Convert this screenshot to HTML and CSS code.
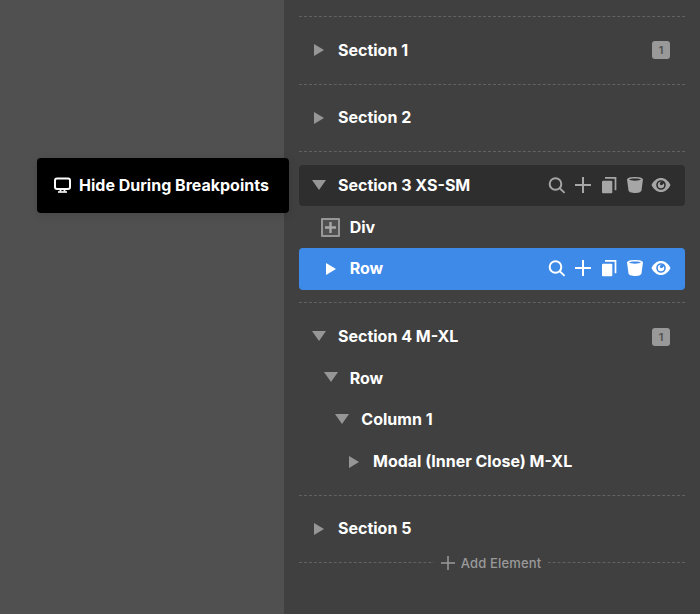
FILE: index.html
```html
<!DOCTYPE html>
<html lang="en">
<head>
<meta charset="utf-8">
<title>Navigator</title>
<link rel="stylesheet" href="styles.css">
</head>
<body>
<svg class="defs" width="0" height="0" aria-hidden="true">
  <symbol id="i-search" viewBox="0 0 18 18"><circle cx="7.5" cy="8" r="5.8" fill="none" stroke="currentColor" stroke-width="2"/><path d="M12 12.500l4.600 4.400" fill="none" stroke="currentColor" stroke-width="1.800"/></symbol>
  <symbol id="i-plus" viewBox="0 0 18 18"><path d="M1 9h16M9 1v16" fill="none" stroke="currentColor" stroke-width="2"/></symbol>
  <symbol id="i-copy" viewBox="0 0 18 18"><path d="M5 1.800h10.500v12.400" fill="none" stroke="currentColor" stroke-width="1.700"/><rect x="2" y="4.700" width="10.300" height="12.600" rx="1" fill="currentColor"/></symbol>
  <symbol id="i-trash" viewBox="0 0 18 18"><path fill-rule="evenodd" d="M1 3.500C1 1.800 5 1 9 1s8 .8 8 2.500c0 .6-.2 1.200-.3 1.900l-1.200 9.100C15.200 16.200 12 17 9 17s-6.200-.8-6.500-2.500L1.300 5.400C1.200 4.700 1 4.100 1 3.500zM3 3.600C3.800 4.300 6.200 4.800 9 4.800s5.200-.5 6-1.200C14.200 2.900 11.800 2.400 9 2.400S3.800 2.900 3 3.600z" fill="currentColor"/></symbol>
  <symbol id="i-eye" viewBox="0 0 20 18"><path fill-rule="evenodd" d="M.5 9C2.500 4.700 6 2 10 2s7.500 2.700 9.500 7c-2 4.300-5.500 7-9.500 7S2.500 13.300.5 9zM10 4.200a4.800 4.800 0 1 0 0 9.600 4.800 4.800 0 0 0 0-9.600z" fill="currentColor"/><path d="M10 5.800a3.200 3.200 0 1 0 3.200 3.200c0-.7-.2-1.300-.6-1.800-.3 1.100-1.200 1.900-2.300 1.900-.9 0-1.500-.6-1.500-1.400 0-.9.6-1.500 1.500-1.700.3 0 .5-.1.700-.2z" fill="currentColor"/></symbol>
</svg>

<main class="layout">
  <div class="canvas"></div>
  <aside class="panel">
    <section class="section">
      <div class="row">
        <span class="caret caret-right"></span><span class="label">Section 1</span>
        <span class="badge">1</span>
      </div>
    </section>
    <section class="section">
      <div class="row">
        <span class="caret caret-right"></span><span class="label">Section 2</span>
      </div>
    </section>
    <section class="section">
      <div class="row row-dark">
        <span class="caret caret-down"></span><span class="label">Section 3 XS-SM</span>
        <div class="actions">
          <svg class="act"><use href="#i-search"/></svg>
          <svg class="act"><use href="#i-plus"/></svg>
          <svg class="act"><use href="#i-copy"/></svg>
          <svg class="act"><use href="#i-trash"/></svg>
          <svg class="act act-eye"><use href="#i-eye"/></svg>
        </div>
      </div>
      <div class="row depth-1">
        <span class="div-icon"><svg width="11" height="11" viewBox="0 0 11 11"><path d="M0 5.500h11M5.500 0v11" fill="none" stroke="currentColor" stroke-width="2.400"/></svg></span><span class="label">Div</span>
      </div>
      <div class="row row-blue depth-1">
        <span class="caret caret-right"></span><span class="label">Row</span>
        <div class="actions">
          <svg class="act"><use href="#i-search"/></svg>
          <svg class="act"><use href="#i-plus"/></svg>
          <svg class="act"><use href="#i-copy"/></svg>
          <svg class="act"><use href="#i-trash"/></svg>
          <svg class="act act-eye"><use href="#i-eye"/></svg>
        </div>
      </div>
    </section>
    <section class="section">
      <div class="row">
        <span class="caret caret-down"></span><span class="label">Section 4 M-XL</span>
        <span class="badge">1</span>
      </div>
      <div class="row depth-1">
        <span class="caret caret-down"></span><span class="label">Row</span>
      </div>
      <div class="row depth-2">
        <span class="caret caret-down"></span><span class="label">Column 1</span>
      </div>
      <div class="row depth-3">
        <span class="caret caret-right"></span><span class="label">Modal (Inner Close) M-XL</span>
      </div>
    </section>
    <section class="section section-last">
      <div class="row">
        <span class="caret caret-right"></span><span class="label">Section 5</span>
      </div>
    </section>
    <div class="add">
      <div class="add-group">
        <svg class="add-plus" width="14" height="14" viewBox="0 0 14 14"><path d="M0 7h14M7 0v14" fill="none" stroke="currentColor" stroke-width="1.500"/></svg>
        <span class="add-label">Add Element</span>
      </div>
    </div>
  </aside>
</main>

<div class="tooltip">
  <svg class="tip-icon" width="17" height="17" viewBox="0 0 17 17"><rect x="1" y="1.500" width="15" height="10.500" rx="2" fill="none" stroke="currentColor" stroke-width="2"/><path d="M6.500 13v1.500M10.500 13v1.500" stroke="currentColor" stroke-width="1.800"/><path d="M4 15h9" stroke="currentColor" stroke-width="1.600"/></svg>
  <span class="tip-label">Hide During Breakpoints</span>
</div>
</body>
</html>
```
FILE: styles.css
```css
* { box-sizing: border-box; }
html, body { margin: 0; height: 100%; }
body {
  background: #505050;
  font-family: Inter, "Liberation Sans", sans-serif;
  overflow: hidden;
}
.defs { position: absolute; }
.layout { display: flex; height: 614px; }
.canvas { width: 284px; flex: none; background: #505050; }
.panel {
  flex: 1;
  background: #404040;
  padding: 16px 15px 0;
}
.section {
  border-top: 1px dashed #626262;
  padding: 12.5px 0;
}
.section-last { padding-bottom: 12px; }
.row {
  height: 41.67px;
  display: flex;
  align-items: center;
  padding-left: 15px;
  border-radius: 4px;
  color: #fff;
}
.depth-1 { padding-left: 26.67px; }
.depth-2 { padding-left: 38.34px; }
.depth-3 { padding-left: 50px; }
.row-dark { background: #2e2e2e; }
.row-blue { background: #3e8ae9; }
.label {
  font-size: 16px;
  font-weight: 700;
  line-height: 20px;
  margin-bottom: 1.5px;
}
.caret {
  width: 24px;
  flex: none;
  height: 12px;
  position: relative;
  color: #999;
}
.caret::before {
  content: "";
  display: block;
  width: 0;
  height: 0;
}
.caret-right::before {
  margin-top: 0;
  border-left: 10px solid #969696;
  border-top: 6.500px solid transparent;
  border-bottom: 6.500px solid transparent;
}
.caret-down::before {
  margin-top: 0;
  margin-left: -2px;
  border-top: 10px solid #969696;
  border-left: 7px solid transparent;
  border-right: 7px solid transparent;
}
.row-blue .caret-right::before { border-left-color: #fff; }
.div-icon {
  flex: none;
  width: 19px;
  height: 19px;
  margin-left: -5px;
  margin-right: 10px;
  border: 2px solid #979797;
  border-radius: 1px;
  background: #505050;
  color: #a8a8a8;
  display: flex;
  align-items: center;
  justify-content: center;
}
.badge {
  margin-left: auto;
  margin-right: 15px;
  width: 18px;
  height: 18px;
  background: #999;
  color: #505050;
  border-radius: 3px;
  font-size: 11px;
  font-weight: 600;
  display: flex;
  align-items: center;
  justify-content: center;
}
.actions {
  margin-left: auto;
  margin-right: 15.500px;
  margin-bottom: 1.5px;
  display: flex;
  gap: 8px;
  align-items: center;
  color: #a6a6a6;
}
.row-blue .actions { color: #fff; }
.act { width: 18px; height: 18px; flex: none; overflow: visible; }
.act-eye { width: 20px; margin-left: -1px; margin-right: -1px; }
.add {
  display: flex;
  align-items: center;
  justify-content: center;
  height: 0;
  padding-right: 2px;
  border-top: 1px dashed #626262;
  color: #9a9a9a;
}
.add-group {
  display: flex;
  align-items: center;
  gap: 6px;
  padding: 0 7px;
  background: #404040;
}
.add-plus { flex: none; }
.add-label {
  font-size: 13px;
  font-weight: 500;
  letter-spacing: 0.15px;
  line-height: 16px;
}
.tooltip {
  position: absolute;
  left: 37px;
  top: 158px;
  width: 252px;
  height: 55px;
  background: #000;
  border-radius: 4px;
  box-shadow: 0 2px 10px rgba(0,0,0,.12);
  color: #fff;
  display: flex;
  align-items: center;
  padding-left: 17px;
  gap: 8px;
  font-size: 16px;
  font-weight: 700;
}
.tip-icon { flex: none; margin-bottom: 1px; }
.tip-label { margin-bottom: 1px; }
```
